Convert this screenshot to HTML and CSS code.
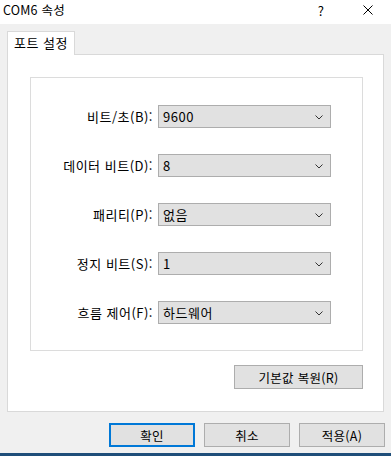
FILE: index.html
```html
<!DOCTYPE html>
<html lang="ko">
<head>
<meta charset="utf-8">
<link rel="stylesheet" href="styles.css">
</head>
<body>
<div class="window">
  <div class="titlebar">
    <span class="title">COM6 속성</span>
    <span class="help">?</span>
    <span class="close">
      <svg width="10" height="10" viewBox="0 0 10 10"><path d="M0.5 0.5 L9.5 9.5 M9.5 0.5 L0.5 9.5" stroke="#000" stroke-width="1" fill="none"/></svg>
    </span>
  </div>
  <div class="body">
    <div class="tabs"><div class="tab">포트 설정</div></div>
    <div class="panel">
      <div class="group">
        <div class="row"><label>비트/초(B):</label><div class="select"><span>9600</span><svg class="chev" width="8" height="5" viewBox="0 0 8 5"><path d="M0.5 0.5 L4 4 L7.5 0.5" stroke="#333" fill="none"/></svg></div></div>
        <div class="row"><label>데이터 비트(D):</label><div class="select"><span>8</span><svg class="chev" width="8" height="5" viewBox="0 0 8 5"><path d="M0.5 0.5 L4 4 L7.5 0.5" stroke="#333" fill="none"/></svg></div></div>
        <div class="row"><label>패리티(P):</label><div class="select"><span>없음</span><svg class="chev" width="8" height="5" viewBox="0 0 8 5"><path d="M0.5 0.5 L4 4 L7.5 0.5" stroke="#333" fill="none"/></svg></div></div>
        <div class="row"><label>정지 비트(S):</label><div class="select"><span>1</span><svg class="chev" width="8" height="5" viewBox="0 0 8 5"><path d="M0.5 0.5 L4 4 L7.5 0.5" stroke="#333" fill="none"/></svg></div></div>
        <div class="row"><label>흐름 제어(F):</label><div class="select"><span>하드웨어</span><svg class="chev" width="8" height="5" viewBox="0 0 8 5"><path d="M0.5 0.5 L4 4 L7.5 0.5" stroke="#333" fill="none"/></svg></div></div>
      </div>
      <div class="reset-row"><button class="btn reset">기본값 복원(R)</button></div>
    </div>
    <div class="actions">
      <button class="btn default">확인</button>
      <button class="btn">취소</button>
      <button class="btn">적용(A)</button>
    </div>
  </div>
  <div class="taskbar"></div>
</div>
</body>
</html>
```

FILE: styles.css
```css
* { box-sizing: border-box; }
html, body { margin: 0; padding: 0; }
body {
  width: 391px;
  height: 456px;
  overflow: hidden;
  background: #f0f0f0;
  font-family: "Noto Sans CJK KR", "Noto Sans", sans-serif;
  font-size: 13px;
  letter-spacing: 0.5px;
  color: #000;
}
.window {
  width: 391px;
  height: 456px;
  display: flex;
  flex-direction: column;
}
.titlebar {
  height: 24px;
  background: #fff;
  display: flex;
  align-items: center;
  padding-left: 3px;
}
.title { flex: 1; line-height: 16px; margin-top: -4px; font-size: 12.5px; letter-spacing: 0.2px; }
.help { width: 12px; margin-right: 36px; margin-top: -4px; text-align: center; }
.close { width: 10px; margin-right: 18px; margin-top: -5px; display: flex; }
.body {
  flex: 1;
  padding: 7px 0 0 7px;
}
.tabs { display: flex; height: 23px; position: relative; z-index: 1; }
.tab {
  width: 68px;
  height: 24px;
  background: #fff;
  border: 1px solid #d9d9d9;
  border-bottom: none;
  padding-left: 6px;
  line-height: 21px;
  white-space: nowrap;
}
.panel {
  width: 377px;
  height: 358px;
  background: #fff;
  border: 1px solid #d9d9d9;
  padding: 22px 0 0 22px;
}
.group {
  width: 333px;
  height: 274px;
  border: 1px solid #dcdcdc;
  padding-top: 27px;
  display: flex;
  flex-direction: column;
  gap: 26px;
}
.row {
  display: flex;
  align-items: center;
  height: 23px;
}
.row label {
  width: 127px;
  text-align: right;
  padding-right: 5px;
  white-space: nowrap;
}
.select {
  width: 173px;
  height: 23px;
  background: #e1e1e1;
  border: 1px solid #adadad;
  display: flex;
  align-items: center;
  justify-content: space-between;
  padding: 0 7px 0 4px;
}
.select span { line-height: 16px; }
.chev { display: block; margin-top: 1px; }
.reset-row {
  display: flex;
  justify-content: flex-end;
  width: 333px;
  margin-top: 14px;
}
.btn {
  font-family: inherit;
  font-size: 12.5px;
  letter-spacing: 0.3px;
  color: #000;
  background: #e1e1e1;
  border: 1px solid #adadad;
  padding: 0;
  margin: 0;
  height: 24px;
  width: 86px;
}
.reset { width: 129px; }
.actions {
  display: flex;
  justify-content: flex-end;
  gap: 9px;
  padding-right: 6px;
  margin-top: 11px;
}
.default { border: 2px solid #0078d7; }
.taskbar {
  height: 3px;
  background: #1f4e79;
}
```
